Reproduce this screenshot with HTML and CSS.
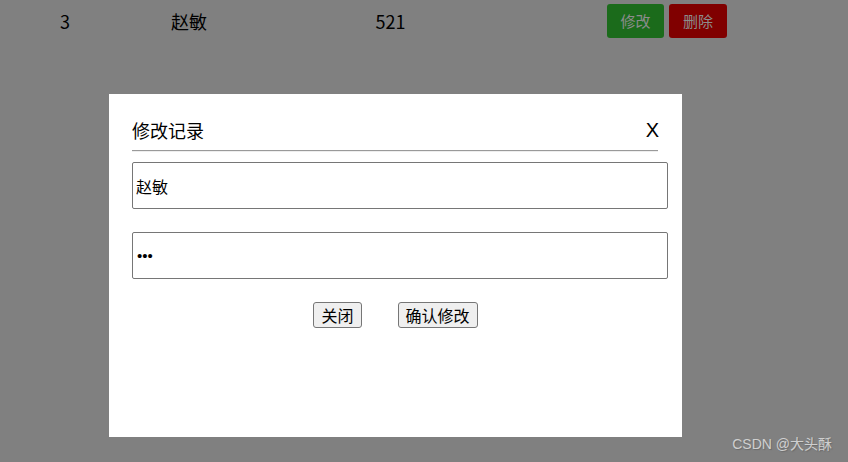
FILE: index.html
```html
<!DOCTYPE html>
<html lang="zh-CN">
<head>
<meta charset="utf-8">
<title>修改记录</title>
<link rel="stylesheet" href="styles.css">
</head>
<body>
<div class="row">
  <div class="cell c1">3</div>
  <div class="cell c2">赵敏</div>
  <div class="cell c3">521</div>
  <div class="cell c4">
    <button class="act edit">修改</button>
    <button class="act del">删除</button>
  </div>
</div>

<div class="modal">
  <div class="head">
    <span class="title">修改记录</span>
    <span class="close">X</span>
  </div>
  <hr class="rule">
  <input class="field" type="text" value="赵敏">
  <input class="field pw" type="password" value="521">
  <div class="btns">
    <button class="btn">关闭</button>
    <button class="btn">确认修改</button>
  </div>
</div>

<div class="mark">CSDN @大头酥</div>
</body>
</html>
```

FILE: styles.css
```css
html, body {
  margin: 0;
  padding: 0;
  height: 100%;
  background: #808080;
  font-family: "Noto Sans CJK SC", "Microsoft YaHei", sans-serif;
  overflow: hidden;
}

.row {
  display: flex;
  align-items: center;
  height: 34px;
  padding: 4px 0 0 8px;
  font-size: 18px;
  color: #000;
}

.cell {
  text-align: center;
  line-height: 34px;
}
.c1 { width: 114px; }
.c2 { width: 134px; }
.c3 { width: 269px; }
.c4 {
  width: 284px;
  display: flex;
  justify-content: center;
  gap: 5px;
}

.act {
  height: 34px;
  padding: 0;
  border: none;
  border-radius: 3px;
  font-family: inherit;
  font-size: 15px;
  line-height: 34px;
  color: #8c8c8c;
}
.edit { background: #1b6b1b; width: 57px; }
.del { background: #800000; width: 58px; }

.modal {
  position: absolute;
  left: 109px;
  top: 94px;
  width: 527px;
  height: 320px;
  padding: 23px 23px 0 23px;
  background: #fff;
}

.head {
  display: flex;
  justify-content: space-between;
  align-items: center;
  height: 26px;
}
.title {
  font-size: 18px;
  color: #000;
}
.close {
  font-family: "Liberation Sans", Arial, sans-serif;
  font-size: 20px;
  color: #000;
}

.rule {
  margin: 7px 0 0 0;
  width: 526px;
  border: none;
  border-top: 1px solid #9a9a9a;
  border-bottom: 1px solid #eeeeee;
  height: 0;
}

.field {
  display: block;
  box-sizing: border-box;
  width: 536px;
  height: 47px;
  margin: 10px 0 0 0;
  padding: 0 3px;
  border: 1px solid #767676;
  border-radius: 2px;
  font-family: inherit;
  font-size: 16px;
  color: #000;
  outline: none;
}
.field.pw {
  margin-top: 23px;
  font-family: "Liberation Sans", Arial, sans-serif;
  font-size: 15px;
  letter-spacing: 0;
  padding-left: 4px;
}

.btns {
  display: flex;
  justify-content: center;
  gap: 36px;
  margin-top: 23px;
}
.btn {
  padding: 2px 7px;
  border: 1px solid #767676;
  border-radius: 3px;
  background: #efefef;
  font-family: inherit;
  font-size: 16px;
  line-height: 20px;
  color: #000;
}

.mark {
  position: absolute;
  right: 16px;
  bottom: 9px;
  font-family: "Liberation Sans", "Noto Sans CJK SC", sans-serif;
  font-size: 14px;
  color: #cfcfcf;
  text-shadow: 1px 1px 1px #6a6a6a;
}
```
